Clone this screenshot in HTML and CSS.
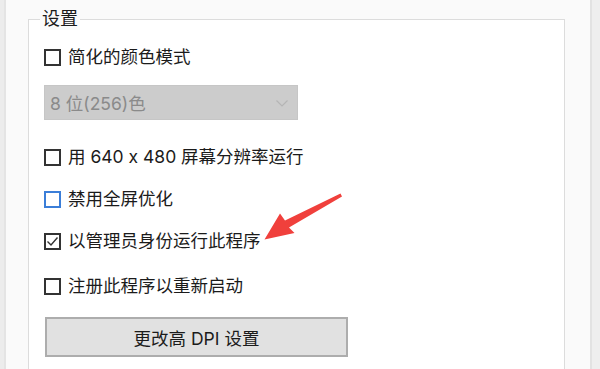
FILE: index.html
```html
<!DOCTYPE html>
<html lang="zh-CN">
<head>
<meta charset="utf-8">
<link rel="stylesheet" href="styles.css">
</head>
<body>
<div class="window">
  <div class="edge-left"></div>
  <div class="main">
    <fieldset class="group">
      <legend class="group-title">设置</legend>
      <div class="options">
        <label class="check row1"><span class="box"></span><span>简化的颜色模式</span></label>
        <div class="select">
          <span class="select-text">8 位(256)色</span>
          <svg class="chev" width="12" height="7" viewBox="0 0 12 7"><path d="M0.5 0.5 L6 6 L11.5 0.5" fill="none" stroke="#b5b5b5" stroke-width="1.2"/></svg>
        </div>
        <label class="check row2"><span class="box"></span><span>用 640 x 480 屏幕分辨率运行</span></label>
        <label class="check row3"><span class="box focus"></span><span>禁用全屏优化</span></label>
        <label class="check row4"><span class="box"><svg width="13" height="13" viewBox="0 0 13 13"><path d="M1.5 6.5 L5 10 L11.5 2.5" fill="none" stroke="#333" stroke-width="1.4"/></svg></span><span>以管理员身份运行此程序</span></label>
        <label class="check row5"><span class="box"></span><span>注册此程序以重新启动</span></label>
        <div class="button">更改高 DPI 设置</div>
      </div>
    </fieldset>
  </div>
  <div class="edge-right"></div>
  <svg class="arrow" width="600" height="369" viewBox="0 0 600 369">
    <polygon points="340.5,193.5 285,220.5 280,213.5 264.5,239.5 294.5,233 289,227.5 342,196.5" fill="#f0403c"/>
  </svg>
</div>
</body>
</html>
```

FILE: styles.css
```css
html, body {
  margin: 0;
  padding: 0;
  width: 600px;
  height: 369px;
  overflow: hidden;
  font-family: Inter, "Noto Sans CJK SC", sans-serif;
  color: #1b1b1b;
}
.window {
  position: relative;
  display: flex;
  width: 600px;
  height: 369px;
  background: #fafafa;
}
.edge-left {
  width: 4px;
  background: #ececec;
  border-right: 2px solid #e4e4e4;
}
.main {
  width: 584px;
  padding: 8px 0 0 22px;
  box-sizing: border-box;
  overflow: hidden;
}
.edge-right {
  flex: 1;
  background: #eeeeee;
  border-left: 2px solid #e2e2e2;
}
.group {
  margin: 0;
  width: 537px;
  height: 400px;
  box-sizing: border-box;
  border: 1px solid #dcdcdc;
  background: #ffffff;
  padding: 0 0 0 15px;
}
.group-title {
  margin-left: -4px;
  padding: 0 2px;
  font-size: 18px;
  line-height: 22px;
  height: 22px;
  background: #fafafa;
}
.options {
  display: flex;
  flex-direction: column;
  align-items: flex-start;
  padding-top: 16px;
}
.check {
  display: flex;
  align-items: center;
  height: 22px;
  font-size: 17.5px;
  line-height: 22px;
  gap: 7px;
}
.box {
  width: 17px;
  height: 17px;
  box-sizing: border-box;
  border: 2px solid #333333;
  background: #fff;
  display: flex;
  align-items: center;
  justify-content: center;
}
.box.focus {
  border-color: #3b7ed8;
}
.select {
  margin-top: 17px;
  width: 254px;
  height: 35px;
  box-sizing: border-box;
  background: #cccccc;
  border: 1px solid #c6c6c6;
  display: flex;
  align-items: center;
  justify-content: space-between;
  padding: 0 9px 0 5px;
  font-size: 17.5px;
  color: #8a8a8a;
}
.chev { margin-top: 2px; }
.row2 { margin-top: 26px; }
.row3 { margin-top: 20px; }
.row4 { margin-top: 20px; }
.row5 { margin-top: 23px; }
.button {
  margin-top: 20px;
  margin-left: 1px;
  width: 303px;
  height: 40px;
  box-sizing: border-box;
  background: #e1e1e1;
  border: 2px solid #adadad;
  display: flex;
  align-items: center;
  justify-content: center;
  font-size: 17.5px;
}
.arrow {
  position: absolute;
  left: 0;
  top: 0;
  pointer-events: none;
}
```
